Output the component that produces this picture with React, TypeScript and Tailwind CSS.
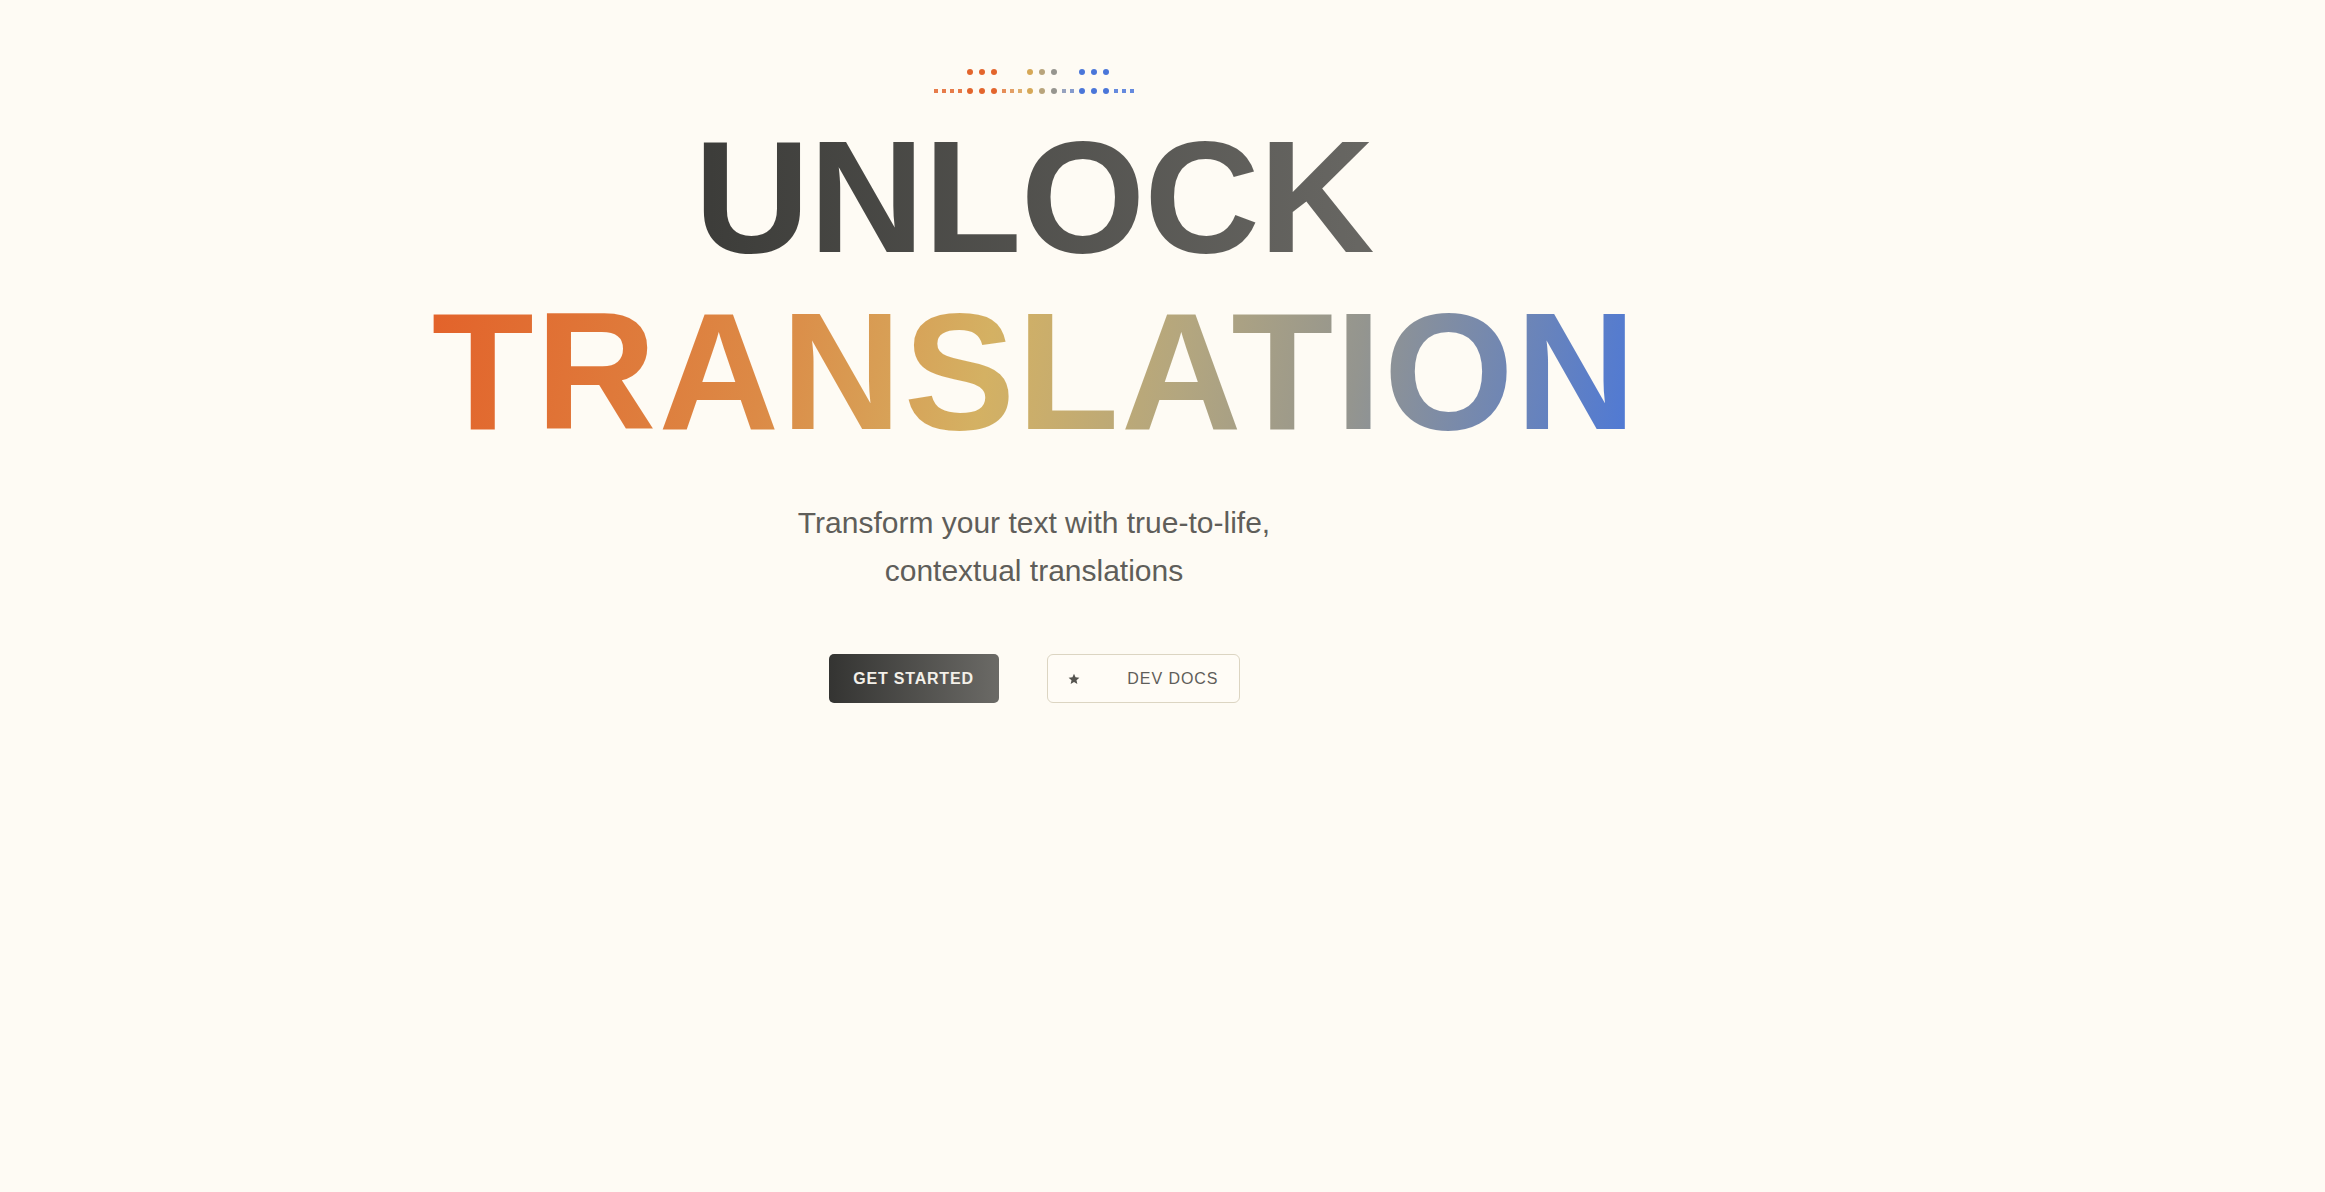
import React from 'react';

type Dot = { kind: 'sq' | 'dot'; color: string; top?: boolean };

const App: React.FC = () => {
    // bottom row of the little signal mark; "top" dots are repeated on the row above
    const dots: Dot[] = [
        { kind: 'sq', color: 'bg-[#e3652c]' },
        { kind: 'sq', color: 'bg-[#e3652c]' },
        { kind: 'sq', color: 'bg-[#e3652c]' },
        { kind: 'sq', color: 'bg-[#e3652c]' },
        { kind: 'dot', color: 'bg-[#e3652c]', top: true },
        { kind: 'dot', color: 'bg-[#e3652c]', top: true },
        { kind: 'dot', color: 'bg-[#e3652c]', top: true },
        { kind: 'sq', color: 'bg-[#e27a3c]' },
        { kind: 'sq', color: 'bg-[#de8e4b]' },
        { kind: 'sq', color: 'bg-[#d9a056]' },
        { kind: 'dot', color: 'bg-[#d6a857]', top: true },
        { kind: 'dot', color: 'bg-[#b8a47c]', top: true },
        { kind: 'dot', color: 'bg-[#96958f]', top: true },
        { kind: 'sq', color: 'bg-[#8492b4]' },
        { kind: 'sq', color: 'bg-[#7089c6]' },
        { kind: 'dot', color: 'bg-[#4a76d9]', top: true },
        { kind: 'dot', color: 'bg-[#4a76d9]', top: true },
        { kind: 'dot', color: 'bg-[#4a76d9]', top: true },
        { kind: 'sq', color: 'bg-[#4a76d9]' },
        { kind: 'sq', color: 'bg-[#4a76d9]' },
        { kind: 'sq', color: 'bg-[#4a76d9]' },
    ];

    const renderRow = (topRow: boolean) => (
        <div className="flex items-center h-[6px]">
            {dots.map((d, i) => (
                <div key={i} className={`flex items-center justify-center ${d.kind === 'sq' ? 'w-[8px]' : 'w-[12px]'}`}>
                    {topRow ? (
                        d.top ? <span className={`block w-[6px] h-[6px] rounded-full ${d.color}`}></span> : null
                    ) : d.kind === 'sq' ? (
                        <span className={`block w-[4px] h-[4px] opacity-85 ${d.color}`}></span>
                    ) : (
                        <span className={`block w-[6px] h-[6px] rounded-full ${d.color}`}></span>
                    )}
                </div>
            ))}
        </div>
    );

    return (
        <div className="bg-[#fefbf4] h-[1192px] overflow-hidden font-['Liberation_Sans',Arial,sans-serif]">
            <main className="w-[2068px] flex flex-col items-center pt-[69px]">
                {/* signal mark */}
                <div className="flex flex-col gap-[13px]">
                    {renderRow(true)}
                    {renderRow(false)}
                </div>

                {/* headline */}
                <h1 className="mt-[16px] flex flex-col items-center font-bold">
                    <span className="inline-block text-[160px] leading-[174px] tracking-[-0.005em] bg-[linear-gradient(90deg,#3c3c39_0%,#686763_100%)] bg-clip-text text-transparent">
                        UNLOCK
                    </span>
                    <span className="inline-block text-[167px] leading-[174px] tracking-[0.012em] mr-[-0.012em] bg-[linear-gradient(100deg,#e3622a_0%,#dc8a46_28%,#d4b163_46%,#b3a67f_62%,#94958f_76%,#4c78d8_100%)] bg-clip-text text-transparent">
                        TRANSLATION
                    </span>
                </h1>

                <p className="mt-[41px] text-[30px] leading-[48px] text-[#5f5e5a] text-center">
                    Transform your text with true-to-life,
                    <br />
                    contextual translations
                </p>

                <div className="mt-[59px] flex items-center gap-[48px]">
                    <button className="w-[170px] h-[49px] rounded-[5px] bg-[linear-gradient(90deg,#343432_0%,#6b6a66_100%)] text-[#f3f0e9] text-[16px] font-bold tracking-[0.05em]">
                        GET STARTED
                    </button>
                    <button className="w-[193px] h-[49px] rounded-[6px] border border-[#dcd5c2] bg-[#fffcf6] flex items-center justify-between pl-[20px] pr-[20px] text-[#5f5e5a] text-[16px] tracking-[0.06em]">
                        <svg width="12" height="12" viewBox="0 0 24 24" className="fill-[#55544f]">
                            <polygon points="12,1.5 15.1,8.6 22.8,9.3 17,14.4 18.7,22 12,18 5.3,22 7,14.4 1.2,9.3 8.9,8.6" />
                        </svg>
                        <span>DEV DOCS</span>
                    </button>
                </div>
            </main>
        </div>
    );
};

export default App;
